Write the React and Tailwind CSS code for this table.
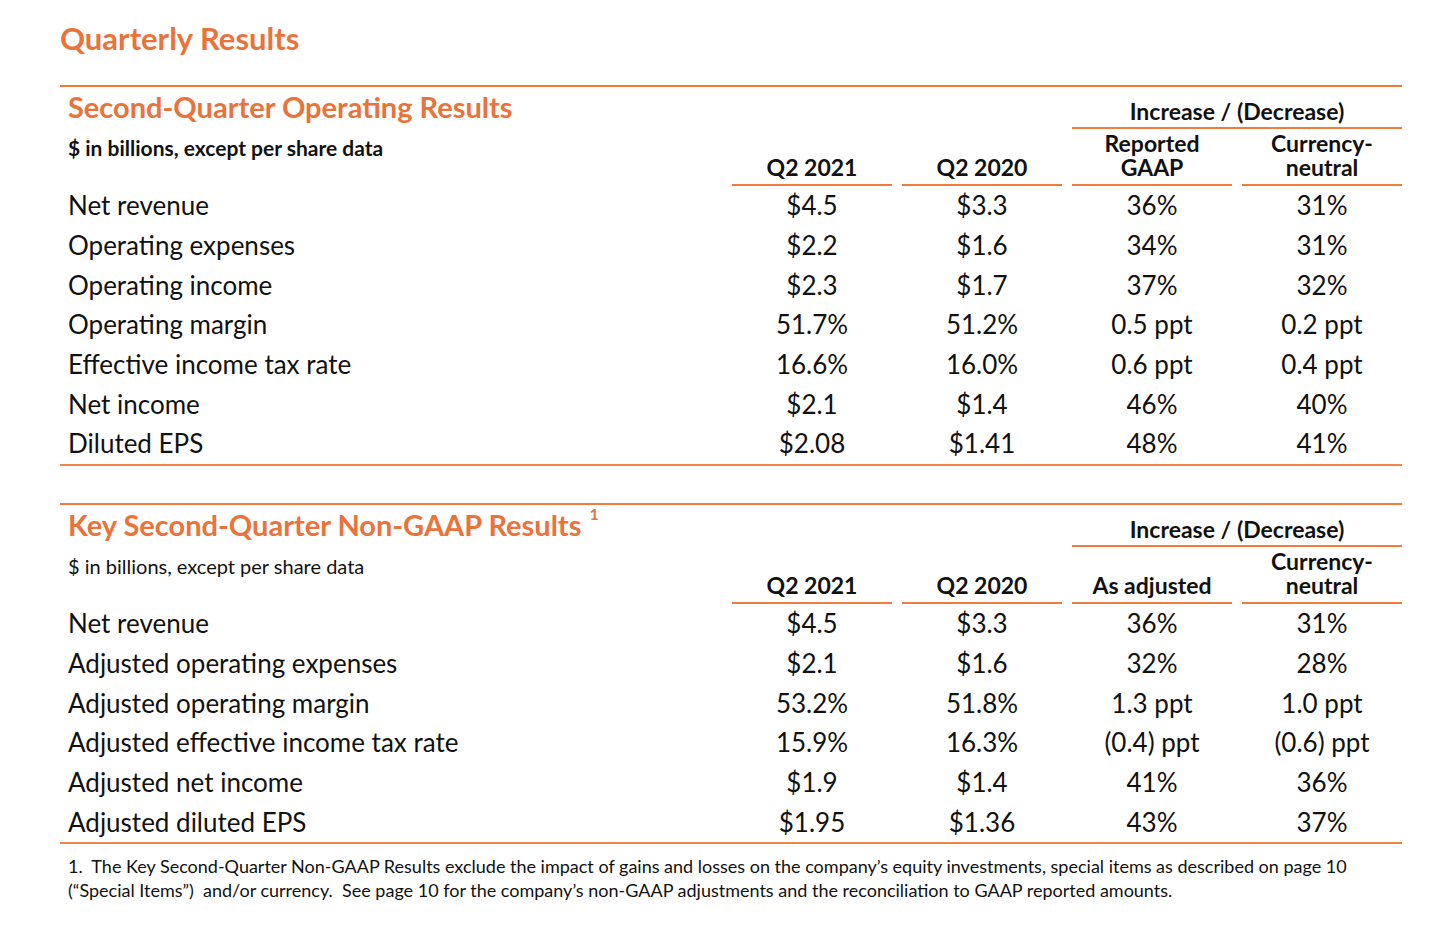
import React from 'react';

const ORANGE_TEXT = 'text-[#e9733a]';

const operating = [
  ['Net revenue', '$4.5', '$3.3', '36%', '31%'],
  ['Operating expenses', '$2.2', '$1.6', '34%', '31%'],
  ['Operating income', '$2.3', '$1.7', '37%', '32%'],
  ['Operating margin', '51.7%', '51.2%', '0.5 ppt', '0.2 ppt'],
  ['Effective income tax rate', '16.6%', '16.0%', '0.6 ppt', '0.4 ppt'],
  ['Net income', '$2.1', '$1.4', '46%', '40%'],
  ['Diluted EPS', '$2.08', '$1.41', '48%', '41%'],
];

const nonGaap = [
  ['Net revenue', '$4.5', '$3.3', '36%', '31%'],
  ['Adjusted operating expenses', '$2.1', '$1.6', '32%', '28%'],
  ['Adjusted operating margin', '53.2%', '51.8%', '1.3 ppt', '1.0 ppt'],
  ['Adjusted effective income tax rate', '15.9%', '16.3%', '(0.4) ppt', '(0.6) ppt'],
  ['Adjusted net income', '$1.9', '$1.4', '41%', '36%'],
  ['Adjusted diluted EPS', '$1.95', '$1.36', '43%', '37%'],
];

const cols = 'grid grid-cols-[1fr_160px_160px_160px_160px] gap-x-[10px]';

function ColHead({ children }) {
  return (
    <div className="self-end text-center text-[23px] font-bold leading-[24px] pb-[5px] border-b-2 border-[#ef7b3c]">
      {children}
    </div>
  );
}

function Section({ title, sup, subtitle, subBold, firstCol, rows }) {
  return (
    <div className="border-t-2 border-[#ef7b3c]">
      <div className={`${cols} h-[99px]`}>
        <div className="pl-[8px]">
          <div className={`mt-[4px] h-[32px] text-[29px] font-bold leading-[32px] ${ORANGE_TEXT}`}>
            {title}
            {sup && (
              <span className="ml-[8px] text-[16px] font-bold leading-none align-top relative -top-[3px]">
                {sup}
              </span>
            )}
          </div>
          <div
            className={`mt-[13px] leading-[24px] ${subBold ? 'text-[21px] font-bold' : 'text-[20px] font-normal'}`}
          >
            {subtitle}
          </div>
        </div>
        <ColHead>Q2 2021</ColHead>
        <ColHead>Q2 2020</ColHead>
        <div className="col-span-2 pt-[12px]">
          <div className="text-center text-[23px] font-bold leading-[24px] pb-[4px] border-b-2 border-[#ef7b3c]">
            Increase / (Decrease)
          </div>
          <div className="mt-[2px] grid grid-cols-2 gap-x-[10px] h-[55px]">
            <ColHead>{firstCol}</ColHead>
            <ColHead>
              Currency-
              <br />
              neutral
            </ColHead>
          </div>
        </div>
      </div>
      <div className="border-b-2 border-[#f08545]">
        {rows.map((r, i) => (
          <div key={i} className={`${cols} h-[39.7px] items-center text-[26px]`}>
            <div className="pl-[8px]">{r[0]}</div>
            <div className="text-center">{r[1]}</div>
            <div className="text-center">{r[2]}</div>
            <div className="text-center">{r[3]}</div>
            <div className="text-center">{r[4]}</div>
          </div>
        ))}
      </div>
    </div>
  );
}

export default function App() {
  return (
    <div
      className="w-[1455px] h-[933px] bg-white text-[#111] overflow-hidden"
      style={{ fontFamily: 'Lato, "Open Sans", sans-serif' }}
    >
      <div className="w-[1342px] ml-[60px]">
        <div className={`pt-[21px] h-[85px] text-[31px] font-bold leading-[34px] ${ORANGE_TEXT}`}>
          Quarterly Results
        </div>
        <Section
          title="Second-Quarter Operating Results"
          subtitle="$ in billions, except per share data"
          subBold
          firstCol={
            <>
              Reported
              <br />
              GAAP
            </>
          }
          rows={operating}
        />
        <div className="h-[37px]" />
        <Section
          title="Key Second-Quarter Non-GAAP Results"
          sup="1"
          subtitle="$ in billions, except per share data"
          firstCol="As adjusted"
          rows={nonGaap}
        />
        <div className="pl-[8px] pt-[10px] text-[18px] leading-[24px]">
          1.&nbsp; The Key Second-Quarter Non-GAAP Results exclude the impact of gains and losses on the
          company’s equity investments, special items as described on page 10
          <br />
          (“Special Items”)&nbsp; and/or currency.&nbsp; See page 10 for the company’s non-GAAP
          adjustments and the reconciliation to GAAP reported amounts.
        </div>
      </div>
    </div>
  );
}
